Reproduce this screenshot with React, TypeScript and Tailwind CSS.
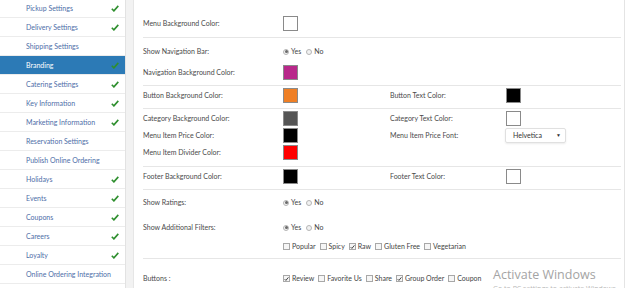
import React from "react";

const navItems = [
  { label: "Pickup Settings", done: true },
  { label: "Delivery Settings", done: true },
  { label: "Shipping Settings", done: false },
  { label: "Branding", done: true, active: true },
  { label: "Catering Settings", done: true },
  { label: "Key Information", done: true },
  { label: "Marketing Information", done: true },
  { label: "Reservation Settings", done: false },
  { label: "Publish Online Ordering", done: false },
  { label: "Holidays", done: true },
  { label: "Events", done: true },
  { label: "Coupons", done: true },
  { label: "Careers", done: true },
  { label: "Loyalty", done: true },
  { label: "Online Ordering Integration", done: false },
];

function Check() {
  return (
    <svg width="8" height="7" viewBox="0 0 8 7" className="shrink-0">
      <path d="M0.8 3.8 L2.9 5.9 L7.3 0.9" fill="none" stroke="#2f8f2f" strokeWidth="1.6" />
    </svg>
  );
}

function Swatch({ color }: { color: string }) {
  return <div className="w-[15px] h-[15px] border border-[#8a8a8a]" style={{ background: color }} />;
}

function Radio({ on }: { on?: boolean }) {
  return (
    <span className="w-[6px] h-[6px] rounded-full border border-[#b5b5b5] bg-[#f2f2f2] flex items-center justify-center">
      {on && <span className="w-[3px] h-[3px] rounded-full bg-[#6a6a6a]" />}
    </span>
  );
}

function YesNo() {
  return (
    <div className="flex items-center gap-[2px] text-[#444]">
      <Radio on />
      <span className="mr-[3px]">Yes</span>
      <Radio />
      <span>No</span>
    </div>
  );
}

function Box({ on, label }: { on?: boolean; label: string }) {
  return (
    <div className="flex items-center gap-[2px] mr-[4px]">
      <span className="w-[7px] h-[7px] border border-[#a8a8a8] bg-[#f6f6f6] flex items-center justify-center">
        {on && (
          <svg width="6" height="6" viewBox="0 0 6 6">
            <path d="M0.8 3.2 L2.3 4.7 L5.3 1" fill="none" stroke="#333" strokeWidth="1.1" />
          </svg>
        )}
      </span>
      <span>{label}</span>
    </div>
  );
}

function Row({ label, children, label2, children2 }: { label: string; children?: React.ReactNode; label2?: string; children2?: React.ReactNode }) {
  return (
    <div className="flex items-center h-[17px]">
      <div className="w-[140px]">{label}</div>
      <div className="w-[107px]">{children}</div>
      {label2 && <div className="w-[116px]">{label2}</div>}
      {children2}
    </div>
  );
}

function Divider() {
  return <div className="h-px bg-[#e6e6e6] mr-[3px]" />;
}

export default function App() {
  return (
    <div className="relative w-[627px] h-[288px] overflow-hidden bg-[#f2f2f2] flex font-['Lato',sans-serif] text-[7px]">
      <div className="w-[126px] bg-white border-r border-[#e2e2e2] flex flex-col mt-[-1px]">
        {navItems.map((it) => (
          <div
            key={it.label}
            className={
              "h-[19px] shrink-0 border-b border-[#ececec] flex items-center pl-[26px] pr-[6px] justify-between " +
              (it.active ? "bg-[#2c7ab6] text-white" : "text-[#4e6ea8]")
            }
          >
            <span>{it.label}</span>
            {it.done && <Check />}
          </div>
        ))}
      </div>

      <div className="ml-[7px] w-[491px] bg-white border-l border-[#e6e6e6] pl-[9px] text-[#4a4a4a]">
        <div className="h-[37px] pt-[15px]">
          <Row label="Menu Background Color:">
            <Swatch color="#ffffff" />
          </Row>
        </div>
        <Divider />
        <div className="h-[47px] pt-[5px]">
          <Row label="Show Navigation Bar:">
            <YesNo />
          </Row>
          <div className="h-[4px]" />
          <Row label="Navigation Background Color:">
            <Swatch color="#b8288a" />
          </Row>
        </div>
        <Divider />
        <div className="h-[22px] pt-[1px]">
          <Row label="Button Background Color:" label2="Button Text Color:" children2={<Swatch color="#000000" />}>
            <Swatch color="#ef7f25" />
          </Row>
        </div>
        <Divider />
        <div className="h-[57px] pt-[1px]">
          <Row label="Category Background Color:" label2="Category Text Color:" children2={<Swatch color="#ffffff" />}>
            <Swatch color="#555555" />
          </Row>
          <Row
            label="Menu Item Price Color:"
            label2="Menu Item Price Font:"
            children2={
              <div className="ml-[-1px] w-[61px] h-[15px] border border-[#e0e0e0] rounded-[2px] shadow-[0_1px_2px_rgba(0,0,0,0.08)] flex items-center justify-between pl-[7px] pr-[4px] text-[#333]">
                <span>Helvetica</span>
                <span className="text-[5px]">▼</span>
              </div>
            }
          >
            <Swatch color="#000000" />
          </Row>
          <Row label="Menu Item Divider Color:">
            <Swatch color="#ff0000" />
          </Row>
        </div>
        <Divider />
        <div className="h-[22px] pt-[1px]">
          <Row label="Footer Background Color:" label2="Footer Text Color:" children2={<Swatch color="#ffffff" />}>
            <Swatch color="#000000" />
          </Row>
        </div>
        <Divider />
        <div className="h-[68px] pt-[4px]">
          <Row label="Show Ratings:">
            <YesNo />
          </Row>
          <div className="h-[8px]" />
          <Row label="Show Additional Filters:">
            <YesNo />
          </Row>
          <div className="h-[2px]" />
          <div className="flex items-center h-[17px] pl-[140px] text-[#444]">
            <Box label="Popular" />
            <Box label="Spicy" />
            <Box on label="Raw" />
            <Box label="Gluten Free" />
            <Box label="Vegetarian" />
          </div>
        </div>
        <Divider />
        <div className="pt-[11px]">
          <div className="flex items-center h-[17px]">
            <div className="w-[140px]">Buttons :</div>
            <div className="flex items-center text-[#444]">
              <Box on label="Review" />
              <Box label="Favorite Us" />
              <Box label="Share" />
              <Box on label="Group Order" />
              <Box label="Coupon" />
            </div>
          </div>
        </div>
      </div>
      <div className="w-[3px] bg-white border-l border-[#e4e4e4]" />

      <div className="absolute left-[493px] top-[269px] text-[#a4a4a4] font-['Open_Sans',sans-serif] leading-none">
        <div className="text-[12.5px]">Activate Windows</div>
        <div className="text-[7px] mt-[3px] text-[#b8b8b8]">Go to PC settings to activate Windows.</div>
      </div>
    </div>
  );
}
